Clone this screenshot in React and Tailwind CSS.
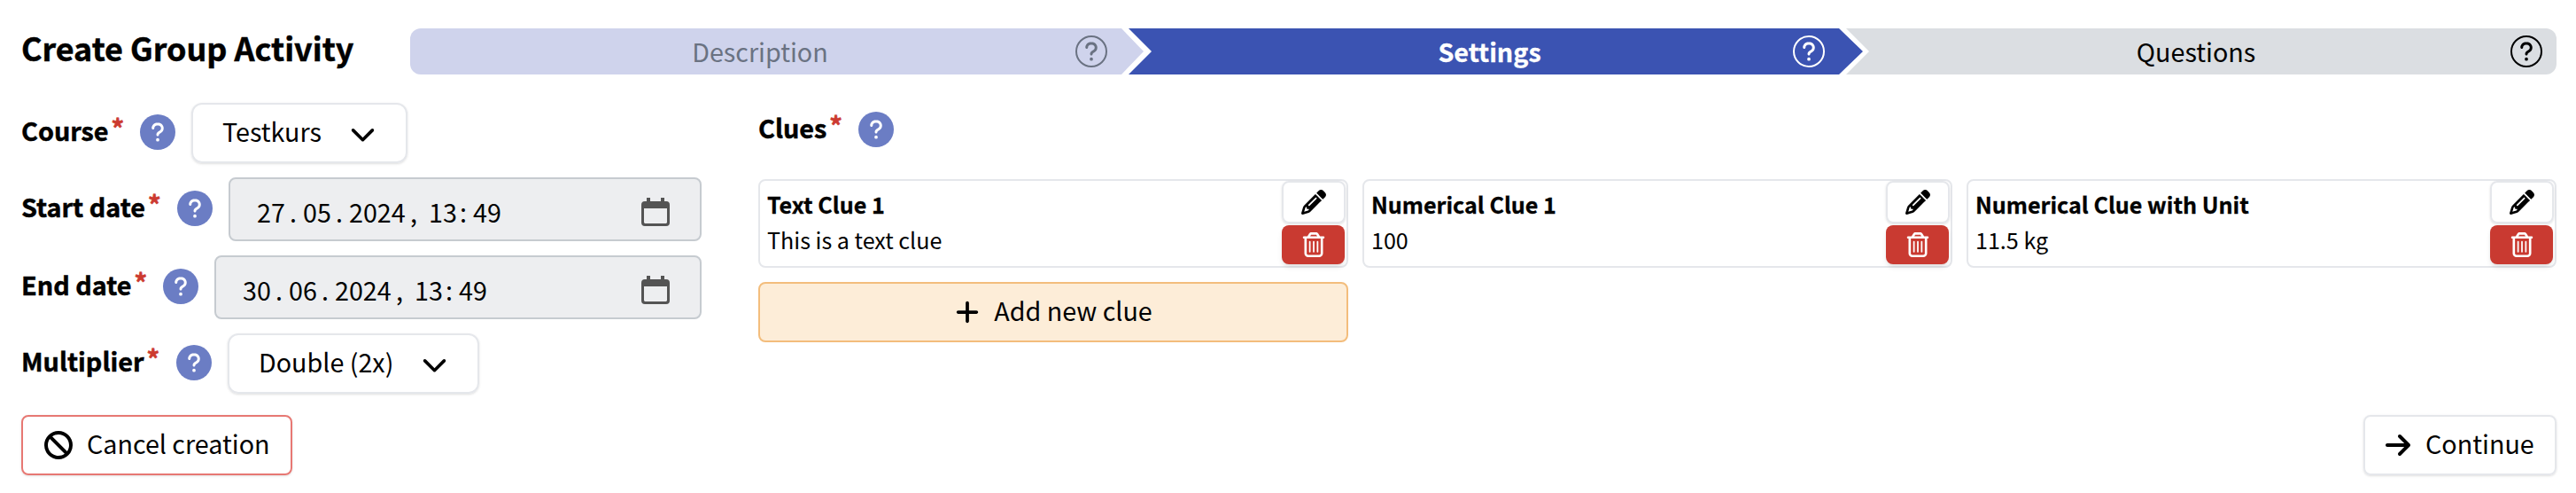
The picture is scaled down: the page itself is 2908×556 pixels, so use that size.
import { FaQuestion, FaBan, FaPlus, FaArrowRight, FaPencil, FaRegTrashCan, FaChevronDown } from "react-icons/fa6";

function CircleQuestion() {
  return (
    <span className="flex size-9 items-center justify-center rounded-full border-2 border-current">
      <FaQuestion className="size-6" />
    </span>
  );
}

function Label({ children, width }) {
  return (
    <div className={`flex items-start ${width}`}>
      <span className="-mt-0.5 text-[28.8px] leading-10 font-bold whitespace-nowrap [-webkit-text-stroke:0.5px]">{children}</span>
      <span className="-mt-0.5 ml-[3px] text-[29px] leading-8 font-bold text-[#cc3a30] [-webkit-text-stroke:0.6px]">*</span>
      <span className="ml-auto flex size-10 items-center justify-center rounded-full bg-[#6b7dc4] text-white">
        <FaQuestion className="size-6" />
      </span>
    </div>
  );
}

function Select({ children, className }) {
  return (
    <div className={`flex h-[68px] items-center justify-between rounded-xl border-2 border-gray-200 pr-[34px] pl-[33px] shadow-sm ${className}`}>
      <span className="-mt-1">{children}</span>
      <FaChevronDown className="size-[29px]" />
    </div>
  );
}

function DateInput({ parts, className }) {
  return (
    <div className={`flex h-[72px] items-center justify-between rounded-lg border-2 border-[#c6cbd0] bg-[#edeef0] pr-[34px] pl-[30px] ${className}`}>
      <span className="flex pt-1.5">
        {parts.map(([text, cls], i) => (
          <span key={i} className={`whitespace-pre ${cls}`}>{text}</span>
        ))}
      </span>
      <svg viewBox="0 0 32 32" className="mt-1.5 size-8 text-[#545454]">
        <path fill="currentColor" fillRule="evenodd" d="M6 0h4v4h12V0h4v4h2a4 4 0 0 1 4 4v20a4 4 0 0 1-4 4H4a4 4 0 0 1-4-4V8a4 4 0 0 1 4-4h2zM3 12v16l1 1h24l1-1V12z" />
      </svg>
    </div>
  );
}

function Clue({ title, value }) {
  return (
    <div className="flex h-[100px] justify-between rounded-lg border-2 border-gray-200">
      <div className="pt-1.5 pl-2 text-[25.1px] leading-10">
        <div className="font-bold [-webkit-text-stroke:0.3px]">{title}</div>
        <div>{value}</div>
      </div>
      <div className="flex w-[73px] flex-col gap-0.5 pr-px">
        <div className="flex h-12 items-center justify-center rounded-lg border-2 border-gray-200 shadow-sm"><FaPencil className="size-7" /></div>
        <div className="mr-px flex h-11 items-center justify-center rounded-lg bg-[#c93a31] text-white shadow-md"><FaRegTrashCan className="size-7" /></div>
      </div>
    </div>
  );
}

const dateParts = (d, m, y, h, min) => [
  [d, "w-[37px]"], [".", "w-[15px]"], [m, "w-[37px]"], [".", "w-[15px]"], [y, "w-[69px]"],
  [",", "w-[21px]"], [h, "w-[35px]"], [":", "w-[15px]"], [min, ""],
];

export default function App() {
  return (
    <div className="h-[556px] w-[2908px] bg-white pt-8 pr-[22px] pl-6 font-['Noto_Sans_CJK_SC',sans-serif] text-[28.7px] leading-10 text-black">
      <div className="flex h-[52px]">
        <h1 className="-mt-[3px] w-[439px] text-[35.9px] leading-[48px] font-bold whitespace-nowrap [-webkit-text-stroke:0.5px]">Create Group Activity</h1>
        <div className="flex h-[52px] w-[828px] items-center rounded-l-xl bg-[#cfd3ec] pr-[41px] text-gray-500 [clip-path:polygon(0_0,803px_0,828px_50%,803px_100%,0_100%)]">
          <span className="flex-1 pl-[39px] text-center">Description</span>
          <CircleQuestion />
        </div>
        <div className="-ml-[17px] flex h-[52px] w-[829px] items-center bg-[#3b53b2] pr-[43px] text-white [clip-path:polygon(0_0,802px_0,829px_50%,802px_100%,0_100%,26px_50%)]">
          <span className="flex-1 pl-[65px] text-center font-bold [-webkit-text-stroke:0.3px]">Settings</span>
          <CircleQuestion />
        </div>
        <div className="-ml-[19px] flex h-[52px] w-[802px] items-center rounded-r-xl bg-[#dbdee2] pr-4 [clip-path:polygon(0_0,100%_0,100%_100%,0_100%,26px_50%)]">
          <span className="flex-1 pl-[40px] text-center">Questions</span>
          <CircleQuestion />
        </div>
      </div>
      <div className="mt-8 flex h-[328px]">
        <div className="flex w-[768px] flex-col gap-4">
          <div className="flex h-[68px] gap-[18px]"><div className="pt-[13px]"><Label width="w-[174px]">Course</Label></div><Select className="w-[244px]">Testkurs</Select></div>
          <div className="flex h-[72px] gap-[18px]"><div className="pt-[15px]"><Label width="w-[216px]">Start date</Label></div><DateInput className="w-[534px]" parts={dateParts("27", "05", "2024", "13", "49")} /></div>
          <div className="flex h-[72px] gap-[18px]"><div className="pt-[15px]"><Label width="w-[200px]">End date</Label></div><DateInput className="w-[550px]" parts={dateParts("30", "06", "2024", "13", "49")} /></div>
          <div className="flex h-[68px] gap-[18px]"><div className="pt-[13px]"><Label width="w-[215px]">Multiplier</Label></div><Select className="w-[284px]">Double (2x)</Select></div>
        </div>
        <div className="ml-16 w-[2030px] pt-[10px]">
          <Label width="w-[153px]">Clues</Label>
          <div className="mt-9 grid grid-cols-3 gap-4">
            <Clue title="Text Clue 1" value="This is a text clue" />
            <Clue title="Numerical Clue 1" value="100" />
            <Clue title="Numerical Clue with Unit" value="11.5 kg" />
            <div className="flex h-[68px] items-center justify-center gap-[15px] rounded-lg border-2 border-[#f3bd7c] bg-[#fdedd8]">
              <FaPlus className="size-[30px]" /><span className="-mt-1">Add new clue</span>
            </div>
          </div>
        </div>
      </div>
      <div className="mt-6 flex justify-between">
        <div className="flex h-[68px] w-[306px] items-center gap-4 rounded-lg border-2 border-[#e77873] pl-6 shadow-sm"><FaBan className="size-8" /><span className="-mt-1 whitespace-nowrap">Cancel creation</span></div>
        <div className="flex h-[68px] w-[218px] items-center gap-[15px] rounded-lg border-2 border-gray-200 pl-[21px] shadow-sm"><FaArrowRight className="size-8" /><span className="-mt-1">Continue</span></div>
      </div>
    </div>
  );
}
